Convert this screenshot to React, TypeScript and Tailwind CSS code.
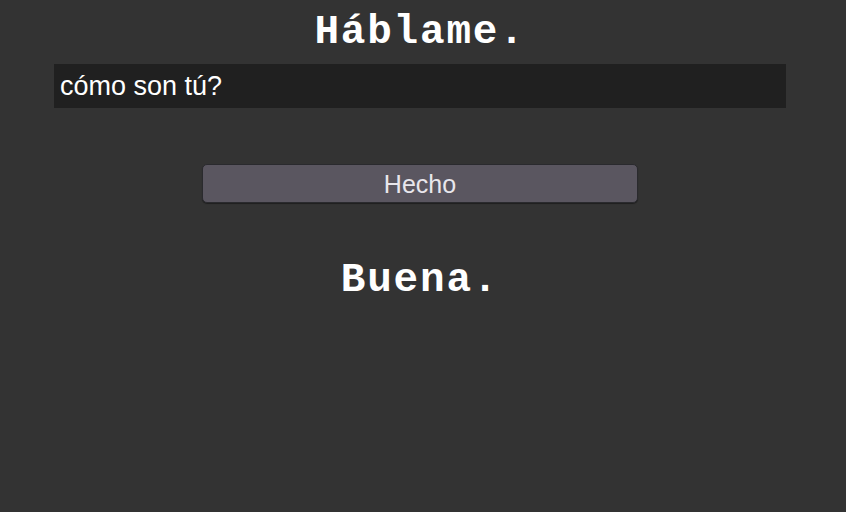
export default function App() {
  return (
    <div className="w-[846px] h-[512px] bg-[#333333] flex flex-col items-center pl-[54px] pr-[60px]">
      <h1 className="mt-[8px] h-[48px] text-[41px] leading-[48px] tracking-[1.8px] font-bold text-white font-['Liberation_Mono',monospace]">
        Háblame.
      </h1>
      <div className="mt-[8px] w-full h-[44px] bg-[#202020] flex items-center px-[6px]">
        <span className="text-[27px] leading-[30px] text-white font-['Liberation_Sans',Arial,sans-serif]">cómo son tú?</span>
      </div>
      <button className="mt-[56px] w-[436px] h-[39px] rounded-[5px] bg-[#5a5660] border border-[#2a2a2e] shadow-[0_1px_1px_rgba(0,0,0,0.4)] text-[25px] leading-[28px] text-[#e8e6ec] font-['Liberation_Sans',Arial,sans-serif] flex items-center justify-center">
        Hecho
      </button>
      <div className="mt-[53px] text-[41px] leading-[48px] tracking-[1.8px] font-bold text-white font-['Liberation_Mono',monospace]">
        Buena.
      </div>
    </div>
  );
}
